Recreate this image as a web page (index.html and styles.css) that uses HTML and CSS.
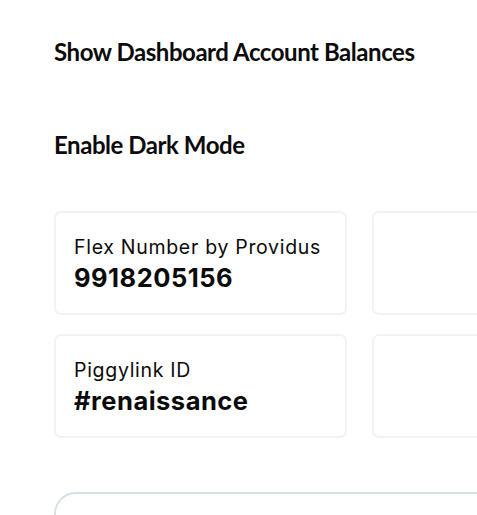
FILE: index.html
```html
<!DOCTYPE html>
<html>
<head>
<meta charset="utf-8">
<link rel="stylesheet" href="styles.css">
</head>
<body>
<div class="page">
  <div class="setting">Show Dashboard Account Balances</div>
  <div class="setting">Enable Dark Mode</div>
  <div class="cards">
    <div class="card">
      <div class="label">Flex Number by Providus</div>
      <div class="value">9918205156</div>
    </div>
    <div class="card"></div>
    <div class="card">
      <div class="label">Piggylink ID</div>
      <div class="value">#renaissance</div>
    </div>
    <div class="card"></div>
  </div>
  <div class="panel"></div>
</div>
</body>
</html>
```
FILE: styles.css
```css
html, body {
  margin: 0;
  padding: 0;
  background: #ffffff;
  overflow: hidden;
}
.page {
  width: 700px;
  padding: 37px 0 0 54px;
  font-family: "Open Sans", sans-serif;
  color: #0b0b0b;
}
.setting {
  font-family: "Lato", sans-serif;
  font-weight: 700;
  font-size: 24px;
  letter-spacing: -0.45px;
  line-height: 30px;
  height: 30px;
  margin-bottom: 64px;
}
.setting + .setting {
  margin-top: -1px;
}
.cards {
  margin-top: -13px;
  display: grid;
  grid-template-columns: 293px 293px;
  column-gap: 25px;
  row-gap: 19px;
}
.card {
  height: 100px;
  border: 2px solid #eff4f3;
  border-radius: 7px;
  padding: 0 0 0 18px;
  box-sizing: content-box;
}
.label {
  margin-top: 21px;
  font-family: "Inter", sans-serif;
  font-size: 19.5px;
  line-height: 26px;
  letter-spacing: 0.7px;
}
.value {
  margin-top: 3px;
  font-family: "Inter", sans-serif;
  font-weight: 700;
  font-size: 25.5px;
  line-height: 30px;
  letter-spacing: 0.5px;
}
.panel {
  margin-top: 54px;
  height: 100px;
  border: 2px solid #d6e0e5;
  border-radius: 22px;
}
```
